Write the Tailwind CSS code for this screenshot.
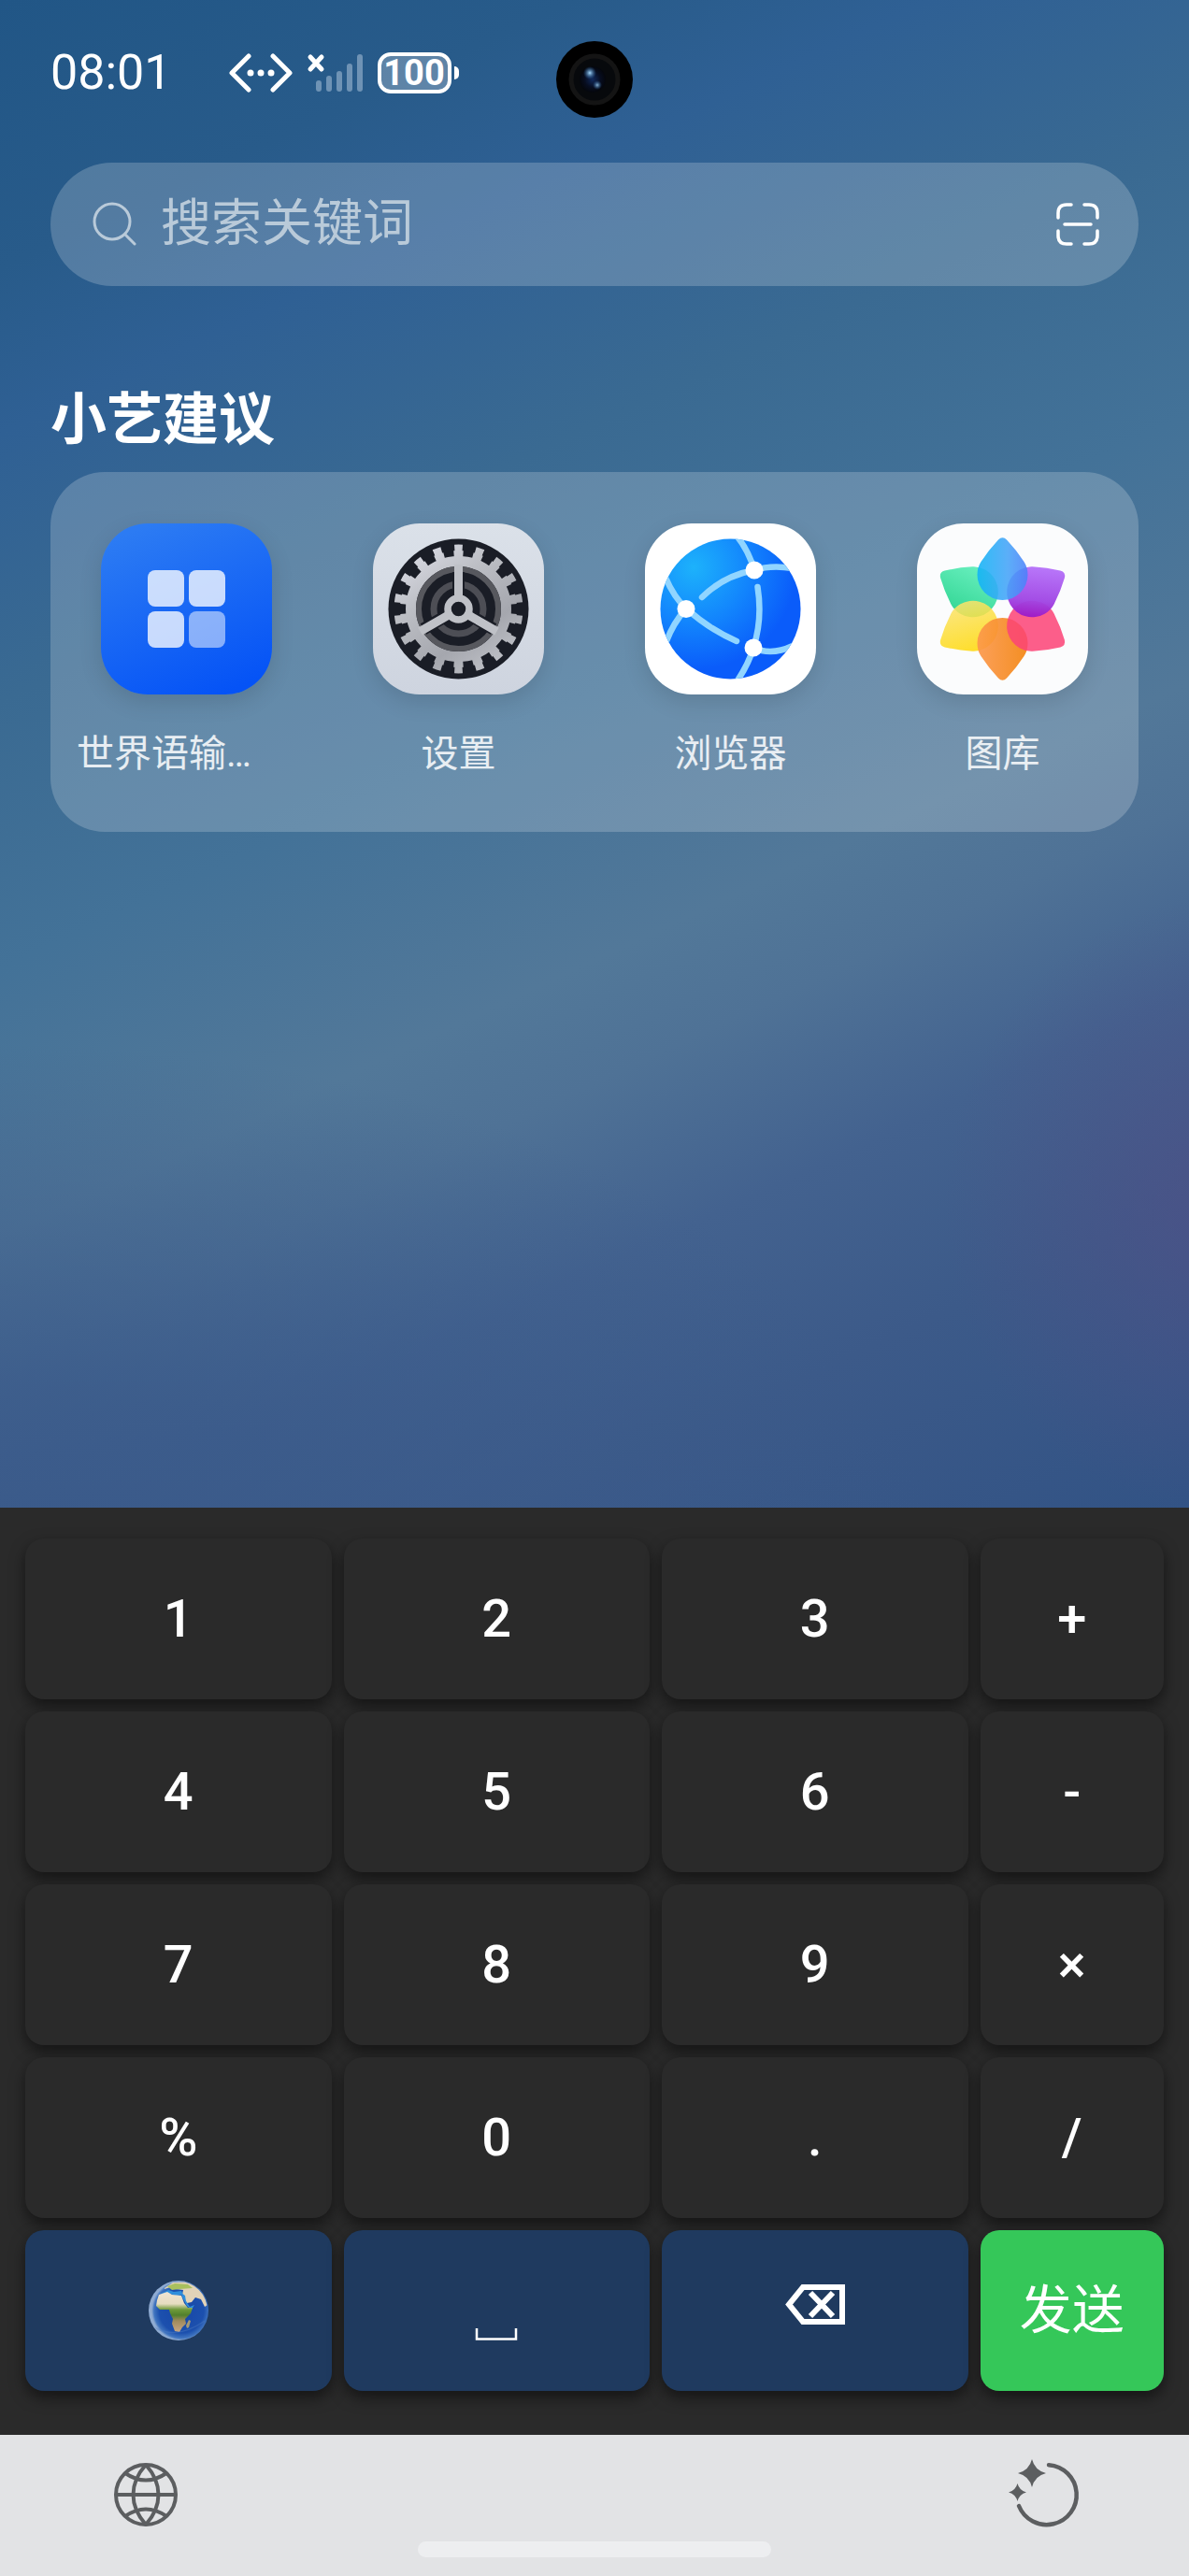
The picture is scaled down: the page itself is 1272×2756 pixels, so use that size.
<!DOCTYPE html>
<html lang="zh-CN">
<head>
  <meta charset="UTF-8" />
  <meta name="viewport" content="width=device-width, initial-scale=1" />
  <title>搜索</title>
  <script src="https://cdn.jsdelivr.net/npm/@tailwindcss/browser@4"></script>
  <style>
    body {
      font-family: Roboto, "Noto Sans CJK SC", sans-serif;
    }
    .wallpaper {
      background:
        radial-gradient(ellipse 300px 330px at 103% 80%, rgba(84, 78, 134, 0.6), rgba(84, 78, 134, 0) 100%),
        radial-gradient(ellipse 1000px 560px at 0% 104%, rgba(58, 90, 138, 1), rgba(58, 90, 138, 0.8) 35%, rgba(58, 90, 138, 0) 100%),
        linear-gradient(155deg, #215686 0%, #285b8a 13%, #2f6094 21%, #3a6a92 34%, #437298 47%, #527899 60%, #4f7296 66%, #43628f 75%, #3c5a89 85%, #325385 100%);
    }
  </style>
</head>
<body class="min-h-screen flex flex-col bg-[#2a2a2a] text-white">

  <!-- 桌面搜索 -->
  <div class="wallpaper relative flex-1 px-[54px]">

    <!-- 状态栏 -->
    <header class="flex items-center h-[60px] mt-[48px] mb-[66px]">
      <span class="text-[52px] leading-[60px]">08:01</span>
      <svg class="ml-[60px] w-[70px] h-[42px]" viewBox="0 0 70 42" fill="none" stroke="#fff" stroke-width="5" stroke-linecap="round" stroke-linejoin="round">
        <path d="M22 3 4 21l18 18M48 3l18 18-18 18" />
        <g fill="#fff" stroke="none"><circle cx="24" cy="21" r="3.5" /><circle cx="35" cy="21" r="3.5" /><circle cx="46" cy="21" r="3.5" /></g>
      </svg>
      <svg class="ml-[14px] w-[62px] h-[42px]" viewBox="0 0 62 42" fill="none" stroke-linecap="round">
        <path d="M4 4l12 13M16 4 4 17" stroke="#fff" stroke-width="5" />
        <path d="M13 32v6M24 27v11M35 22v16M46 14v24M57 4v34" stroke="#6f93b5" stroke-width="6" />
      </svg>
      <div class="ml-[14px] flex items-center gap-[3px]">
        <div class="w-[79px] h-[44px] rounded-[14px] border-4 border-white bg-white/25 flex items-center justify-center text-[38px] leading-none font-bold">100</div>
        <div class="w-[5px] h-[14px] rounded-r-full bg-white"></div>
      </div>
    </header>

    <!-- 前置摄像头 -->
    <svg class="absolute left-1/2 top-[44px] -ml-[41px] w-[82px] h-[82px]" viewBox="0 0 82 82">
      <defs>
        <radialGradient id="lens"><stop offset="0" stop-color="#10285a" /><stop offset="0.6" stop-color="#070d20" /><stop offset="1" stop-color="#04060c" /></radialGradient>
        <radialGradient id="glint"><stop offset="0" stop-color="#a8dcff" /><stop offset="1" stop-color="#2b6db5" stop-opacity="0" /></radialGradient>
      </defs>
      <circle cx="41" cy="41" r="41" fill="#000" />
      <circle cx="41" cy="41" r="25" fill="#07090c" stroke="#141414" stroke-width="5" />
      <circle cx="39" cy="41" r="14" fill="url(#lens)" />
      <circle cx="36" cy="34" r="7" fill="url(#glint)" />
      <circle cx="44" cy="47" r="5" fill="url(#glint)" opacity="0.8" />
    </svg>

    <!-- 搜索框 -->
    <form class="flex items-center h-[132px] rounded-full bg-white/20 pl-[45px] pr-[41px]">
      <svg class="w-[48px] h-[48px] shrink-0" viewBox="0 0 48 48" fill="none" stroke="#b9cad9" stroke-width="3" stroke-linecap="round">
        <circle cx="21" cy="21" r="19" /><path d="M35 35l10 10" />
      </svg>
      <input type="search" aria-label="搜索关键词" placeholder="搜索关键词" class="flex-1 min-w-0 ml-[25px] bg-transparent outline-none text-[54px] leading-[72px] placeholder:text-[#b9cad9]" />
      <button type="button" aria-label="扫一扫" class="w-[48px] h-[48px] shrink-0">
        <svg viewBox="0 0 48 48" fill="none" stroke="#fff" stroke-width="3.5" stroke-linecap="round">
          <path d="M3 17v-5q0-9 9-9h5M31 3h5q9 0 9 9v5M45 31v5q0 9-9 9h-5M17 45h-5q-9 0-9-9v-5M10 24h28" />
        </svg>
      </button>
    </form>

    <!-- 建议 -->
    <h2 class="mt-[100px] mb-[11px] text-[60px] leading-[88px] font-bold">小艺建议</h2>
    <section class="grid grid-cols-4 h-[385px] rounded-[58px] bg-white/20 pt-[55px]">

      <a href="#" class="flex flex-col items-center px-[28px]">
        <svg class="w-[183px] h-[183px] rounded-[50px] shadow-[0_8px_24px_rgba(0,0,0,0.12)]" viewBox="0 0 183 183">
          <defs><linearGradient id="app" x1="0.3" y1="0" x2="0.7" y2="1"><stop offset="0" stop-color="#2c7bf3" /><stop offset="1" stop-color="#0553f6" /></linearGradient></defs>
          <rect width="183" height="183" fill="url(#app)" />
          <g fill="#fff" fill-opacity="0.77">
            <rect x="50" y="50" width="39" height="39" rx="8" /><rect x="94" y="50" width="39" height="39" rx="8" /><rect x="50" y="94" width="39" height="39" rx="8" />
            <rect x="94" y="94" width="39" height="39" rx="8" fill-opacity="0.5" />
          </g>
        </svg>
        <span class="mt-[34px] self-stretch text-[40px] leading-[60px] text-white/85 truncate">世界语输…</span>
      </a>

      <a href="#" class="flex flex-col items-center px-[28px]">
        <svg class="w-[183px] h-[183px] rounded-[50px] shadow-[0_8px_24px_rgba(0,0,0,0.12)]" viewBox="0 0 183 183" fill="none">
          <defs>
            <linearGradient id="plate" x1="0" y1="0" x2="0" y2="1"><stop offset="0" stop-color="#dbe1e9" /><stop offset="1" stop-color="#ced4df" /></linearGradient>
            <linearGradient id="metal" gradientUnits="userSpaceOnUse" x1="50" y1="30" x2="135" y2="155"><stop offset="0" stop-color="#d6d7e0" /><stop offset="0.3" stop-color="#bdbfc5" /><stop offset="0.7" stop-color="#a5a7ae" /><stop offset="1" stop-color="#c0c2c8" /></linearGradient>
          </defs>
          <rect width="183" height="183" fill="url(#plate)" />
          <circle cx="91.5" cy="91.5" r="75" fill="#1a1d26" />
          <g stroke="url(#metal)">
            <circle cx="91.5" cy="91.5" r="58.500" stroke-width="8" pathLength="180" stroke-dasharray="4.900 5.100" stroke-dashoffset="7.450" />
            <circle cx="91.5" cy="91.5" r="65" stroke-width="8" pathLength="180" stroke-dasharray="3.800 6.200" stroke-dashoffset="6.900" />
            <circle cx="91.5" cy="91.5" r="51" stroke-width="11" />
          </g>
          <circle cx="91.5" cy="91.5" r="42.500" stroke="#57585e" stroke-width="6" />
          <circle cx="91.5" cy="91.5" r="26.500" stroke="#4d4e55" stroke-width="7" />
          <path d="M91.500 52v26M54 113l26-15M129 113l-26-15" stroke="#1a1d26" stroke-width="13" />
          <path d="M91.500 44v34M50.500 115.500l29.500-17M132.500 115.500l-29.500-17" stroke="#bfc1c7" stroke-width="9" />
          <circle cx="91.5" cy="91.5" r="11.500" fill="#1a1d26" stroke="#bfc1c7" stroke-width="7.500" />
        </svg>
        <span class="mt-[34px] text-[40px] leading-[60px] text-white/85">设置</span>
      </a>

      <a href="#" class="flex flex-col items-center px-[28px]">
        <svg class="w-[183px] h-[183px] rounded-[50px] shadow-[0_8px_24px_rgba(0,0,0,0.12)]" viewBox="0 0 183 183" fill="none">
          <defs>
            <radialGradient id="web" gradientUnits="userSpaceOnUse" cx="52" cy="47" r="110"><stop offset="0" stop-color="#1db2fb" /><stop offset="0.55" stop-color="#1284fd" /><stop offset="1" stop-color="#0a5cfa" /></radialGradient>
            <clipPath id="webClip"><circle cx="91.5" cy="91.5" r="75" /></clipPath>
          </defs>
          <rect width="183" height="183" fill="#fff" />
          <circle cx="91.5" cy="91.5" r="75" fill="url(#web)" />
          <g clip-path="url(#webClip)" stroke="#91d5ff" stroke-width="6.5" stroke-linecap="round">
            <path d="M97 12Q110 27 117 50Q135 44 158 48M61 79Q84 56 117 50M22 58Q31 79 44 91Q30 107 23 126M44 91Q70 114 98 126M120.500 68Q126 102 116 133Q111 150 99 168M116 133Q135 142 158 131" />
          </g>
          <g fill="#fff"><circle cx="44" cy="91.500" r="9.500" /><circle cx="117" cy="50" r="9.500" /><circle cx="116" cy="133" r="9.500" /></g>
        </svg>
        <span class="mt-[34px] text-[40px] leading-[60px] text-white/85">浏览器</span>
      </a>

      <a href="#" class="flex flex-col items-center px-[28px]">
        <svg class="w-[183px] h-[183px] rounded-[50px] shadow-[0_8px_24px_rgba(0,0,0,0.12)]" viewBox="0 0 183 183">
          <defs>
            <path id="petal" d="M87 17.500Q91.500 13 96 17.500Q106 28 114.500 41Q118.500 47 118.500 55A27 27 0 0 1 64.500 55Q64.500 47 68.500 41Q77 28 87 17.500Z" />
            <linearGradient id="pBlue"><stop offset="0" stop-color="#10b4f6" /><stop offset="0.6" stop-color="#45a4f8" /><stop offset="1" stop-color="#4c80fa" /></linearGradient>
            <linearGradient id="pPurple" x1="0.2" y1="0.2" x2="1" y2="0.9"><stop offset="0" stop-color="#b673fa" /><stop offset="0.6" stop-color="#a046e4" /><stop offset="1" stop-color="#9a08bd" /></linearGradient>
            <linearGradient id="pGreen" x1="0" y1="0.6" x2="1" y2="0.5"><stop offset="0" stop-color="#35d796" /><stop offset="1" stop-color="#68efbe" /></linearGradient>
            <linearGradient id="pYellow" x1="1" y1="0.6" x2="0" y2="0.3"><stop offset="0" stop-color="#fbe36a" /><stop offset="1" stop-color="#ffd800" /></linearGradient>
            <linearGradient id="pOrange" x1="1" y1="0.5" x2="0" y2="0.5"><stop offset="0" stop-color="#fc984c" /><stop offset="1" stop-color="#f38510" /></linearGradient>
          </defs>
          <rect width="183" height="183" fill="#fbfcfd" />
          <use href="#petal" fill="url(#pGreen)" transform="rotate(300 91.500 91.500)" />
          <use href="#petal" fill="url(#pYellow)" fill-opacity="0.86" transform="rotate(240 91.500 91.500)" />
          <use href="#petal" fill="url(#pOrange)" fill-opacity="0.92" transform="rotate(180 91.500 91.500)" />
          <use href="#petal" fill="#fb4377" fill-opacity="0.86" transform="rotate(120 91.500 91.500)" />
          <use href="#petal" fill="url(#pPurple)" fill-opacity="0.96" transform="rotate(60 91.500 91.500)" />
          <use href="#petal" fill="url(#pBlue)" fill-opacity="0.88" />
        </svg>
        <span class="mt-[34px] text-[40px] leading-[60px] text-white/85">图库</span>
      </a>
    </section>
  </div>

  <!-- 键盘 -->
  <div class="grid grid-cols-[5fr_5fr_5fr_3fr] auto-rows-[172px] gap-[13px] px-[27px] pt-[33px] pb-[47px] bg-[#2a2a2a] text-[56px] font-medium">
    <button class="rounded-[20px] bg-[#2a2a2a] shadow-[0_7px_16px_rgba(0,0,0,0.5)]">1</button>
    <button class="rounded-[20px] bg-[#2a2a2a] shadow-[0_7px_16px_rgba(0,0,0,0.5)]">2</button>
    <button class="rounded-[20px] bg-[#2a2a2a] shadow-[0_7px_16px_rgba(0,0,0,0.5)]">3</button>
    <button class="rounded-[20px] bg-[#2a2a2a] shadow-[0_7px_16px_rgba(0,0,0,0.5)]">+</button>

    <button class="rounded-[20px] bg-[#2a2a2a] shadow-[0_7px_16px_rgba(0,0,0,0.5)]">4</button>
    <button class="rounded-[20px] bg-[#2a2a2a] shadow-[0_7px_16px_rgba(0,0,0,0.5)]">5</button>
    <button class="rounded-[20px] bg-[#2a2a2a] shadow-[0_7px_16px_rgba(0,0,0,0.5)]">6</button>
    <button class="rounded-[20px] bg-[#2a2a2a] shadow-[0_7px_16px_rgba(0,0,0,0.5)]">-</button>

    <button class="rounded-[20px] bg-[#2a2a2a] shadow-[0_7px_16px_rgba(0,0,0,0.5)]">7</button>
    <button class="rounded-[20px] bg-[#2a2a2a] shadow-[0_7px_16px_rgba(0,0,0,0.5)]">8</button>
    <button class="rounded-[20px] bg-[#2a2a2a] shadow-[0_7px_16px_rgba(0,0,0,0.5)]">9</button>
    <button class="rounded-[20px] bg-[#2a2a2a] shadow-[0_7px_16px_rgba(0,0,0,0.5)]">×</button>

    <button class="rounded-[20px] bg-[#2a2a2a] shadow-[0_7px_16px_rgba(0,0,0,0.5)]">%</button>
    <button class="rounded-[20px] bg-[#2a2a2a] shadow-[0_7px_16px_rgba(0,0,0,0.5)]">0</button>
    <button class="rounded-[20px] bg-[#2a2a2a] shadow-[0_7px_16px_rgba(0,0,0,0.5)]">.</button>
    <button class="rounded-[20px] bg-[#2a2a2a] shadow-[0_7px_16px_rgba(0,0,0,0.5)]">/</button>

    <button aria-label="切换键盘" class="flex items-center justify-center rounded-[20px] bg-[#1f3a5f] shadow-[0_7px_16px_rgba(0,0,0,0.5)]">
      <svg class="w-[64px] h-[64px]" viewBox="0 0 64 64">
        <defs>
          <radialGradient id="sea" cx="0.55" cy="0.5" r="0.5"><stop offset="0" stop-color="#1746a6" /><stop offset="0.75" stop-color="#1c50ae" /><stop offset="0.92" stop-color="#3f74c0" /><stop offset="1" stop-color="#8fabd2" /></radialGradient>
          <linearGradient id="africa" x1="0" y1="0" x2="0" y2="1"><stop offset="0" stop-color="#f0e4d3" /><stop offset="0.3" stop-color="#e6dcc0" /><stop offset="0.44" stop-color="#6f9a3a" /><stop offset="0.58" stop-color="#51802c" /><stop offset="0.72" stop-color="#a08a5c" /><stop offset="1" stop-color="#c8a684" /></linearGradient>
          <clipPath id="earthClip"><circle cx="32" cy="32" r="31" /></clipPath>
        </defs>
        <circle cx="32" cy="32" r="32" fill="url(#sea)" />
        <g clip-path="url(#earthClip)">
          <path d="M17 8 26 2 42 1l10 6 8 10 3 9-3 2-4-8-6-2-4 5-5 1-5-9 1-5-8-1-6-2-6 2z" fill="#e2d3b8" />
          <path d="M20 6l8-3 14 1 5 4-14 1-8 1z" fill="#a9c05e" />
          <path d="M13 14l8-4 6 2 8-1 2 4-7 1-8-2-7 2zM35 13l4 3 1 6 4 6 5-2-3 5-5-4-5-9z" fill="#2f8fdc" />
          <path d="M11 15l9-3 5 3 10 1 3 8 4 5 5 0-2 6-6 6 1 5-4 4-3 5-5-1-3-8 1-5-3-6-1-4-10 0-4-4 1-6z" fill="url(#africa)" />
          <path d="M43 42l2 1-2 7-2 1-1-3z" fill="#a49a78" />
          <path d="M6 50q24 14 54-7" fill="none" stroke="#4f7cc4" stroke-width="1.500" opacity="0.4" />
        </g>
      </svg>
    </button>
    <button aria-label="空格" class="flex items-center justify-center rounded-[20px] bg-[#1f3a5f] shadow-[0_7px_16px_rgba(0,0,0,0.5)]">
      <svg class="w-[56px] h-[64px]" viewBox="0 0 56 64" fill="none" stroke="#fff" stroke-width="2.500"><path d="M7 51v11.500h42V51" /></svg>
    </button>
    <button aria-label="删除" class="flex items-center justify-center rounded-[20px] bg-[#1f3a5f] shadow-[0_7px_16px_rgba(0,0,0,0.5)]">
      <svg class="w-[64px] h-[56px]" viewBox="0 0 64 56" fill="none" stroke="#fff" stroke-width="6"><path d="M19 3h42v37H19L4 21.500zM27 9l24 25M51 9 27 34" /></svg>
    </button>
    <button class="rounded-[20px] bg-[#35c759] font-normal shadow-[0_7px_16px_rgba(0,0,0,0.5)]">发送</button>
  </div>

  <!-- 底部导航 -->
  <footer class="bg-[#e2e3e5] pt-[24px] pb-[20px]">
    <div class="flex justify-between px-[116px]">
      <button aria-label="切换输入法" class="w-[80px] h-[80px]">
        <svg viewBox="0 0 80 80" fill="none" stroke="#5c5e60" stroke-width="4">
          <circle cx="40" cy="40" r="32" />
          <path d="M8 40h64M40 8C22 28 22 52 40 72M40 8C58 28 58 52 40 72M18 17Q40 32 62 17M18 63Q40 48 62 63" />
        </svg>
      </button>
      <button aria-label="智能助手" class="w-[80px] h-[80px]">
        <svg viewBox="0 0 80 80" fill="none">
          <path d="M46 8.200A32 32 0 1 1 14 52" stroke="#5c5e60" stroke-width="4.500" stroke-linecap="round" />
          <path d="M28 2q3 12 15 15q-12 3-15 15q-3-12-15-15q12-3 15-15zM12.500 28q2 7.500 9.500 9.500q-7.500 2-9.500 9.500q-2-7.500-9.500-9.500q7.500-2 9.500-9.500z" fill="#5c5e60" />
        </svg>
      </button>
    </div>
    <div class="w-[378px] h-[17px] mx-auto mt-[10px] rounded-full bg-[#edeef0]"></div>
  </footer>

</body>
</html>
